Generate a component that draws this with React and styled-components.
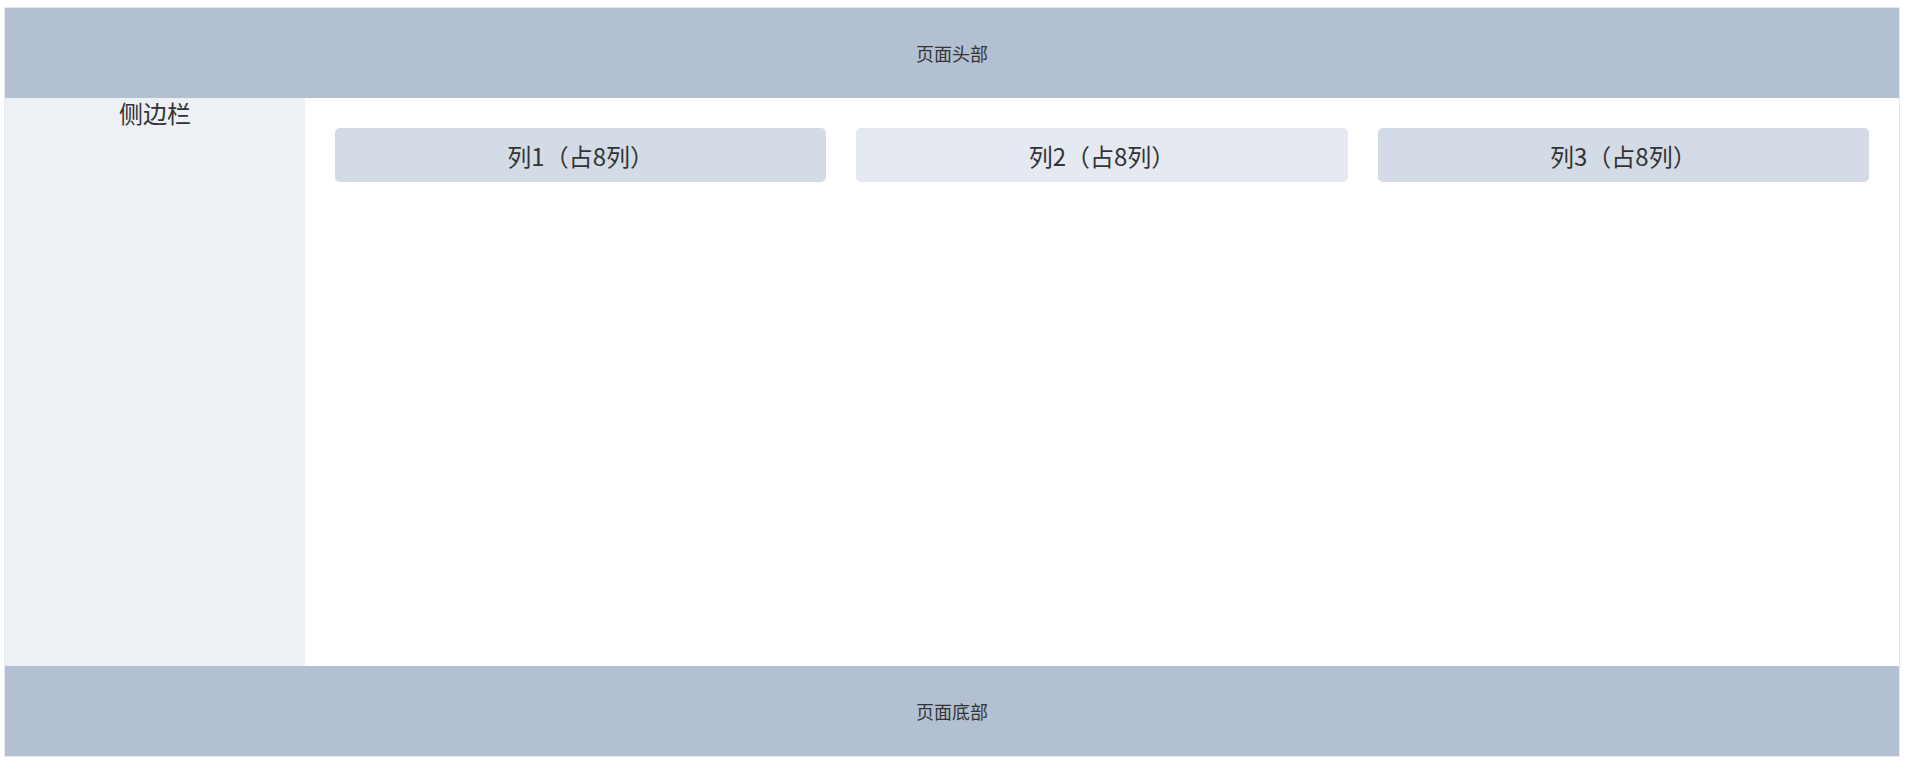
import React from "react"
import styled, {createGlobalStyle} from "styled-components"

const columns = [
    {label: "列1（占8列）", light: false},
    {label: "列2（占8列）", light: true},
    {label: "列3（占8列）", light: false},
]

function App() {
    return (
        <>
            <GlobalStyle />
            <Frame>
                <Bar>页面头部</Bar>
                <Middle>
                    <Aside>侧边栏</Aside>
                    <Main>
                        <Row>
                            {columns.map((col, i) => (
                                <Cell key={i} $light={col.light}>{col.label}</Cell>
                            ))}
                        </Row>
                    </Main>
                </Middle>
                <Bar>页面底部</Bar>
            </Frame>
        </>
    )
}

const GlobalStyle = createGlobalStyle`
    html, body {
        margin: 0;
        padding: 0;
        background: #ffffff;
    }

    body {
        font-family: "Noto Sans CJK SC", "Noto Sans", sans-serif;
        color: #333333;
    }
`

const Frame = styled.div`
    display: flex;
    flex-direction: column;
    margin: 7px 6px 0 4px;
    height: 750px;
    border: 1px solid #e6e8eb;
    box-sizing: border-box;
`

const Bar = styled.div`
    display: flex;
    align-items: center;
    justify-content: center;
    height: 90px;
    flex-shrink: 0;
    background-color: #b3c0d1;
    font-size: 18px;
    color: #333333;
`

const Middle = styled.div`
    display: flex;
    flex: 1;
    min-height: 0;
`

const Aside = styled.aside`
    width: 300px;
    flex-shrink: 0;
    background-color: #edf0f5;
    text-align: center;
    font-size: 24px;
    line-height: 30px;
    color: #333333;
`

const Main = styled.main`
    flex: 1;
    background-color: #ffffff;
    padding: 30px;
`

const Row = styled.div`
    display: grid;
    grid-template-columns: repeat(3, 1fr);
    gap: 30px;
`

const Cell = styled.div`
    display: flex;
    align-items: center;
    justify-content: center;
    height: 54px;
    border-radius: 5px;
    background-color: ${props => props.$light ? "#e5e9f2" : "#d3dce6"};
    font-size: 24px;
    color: #333333;
`

export default App
